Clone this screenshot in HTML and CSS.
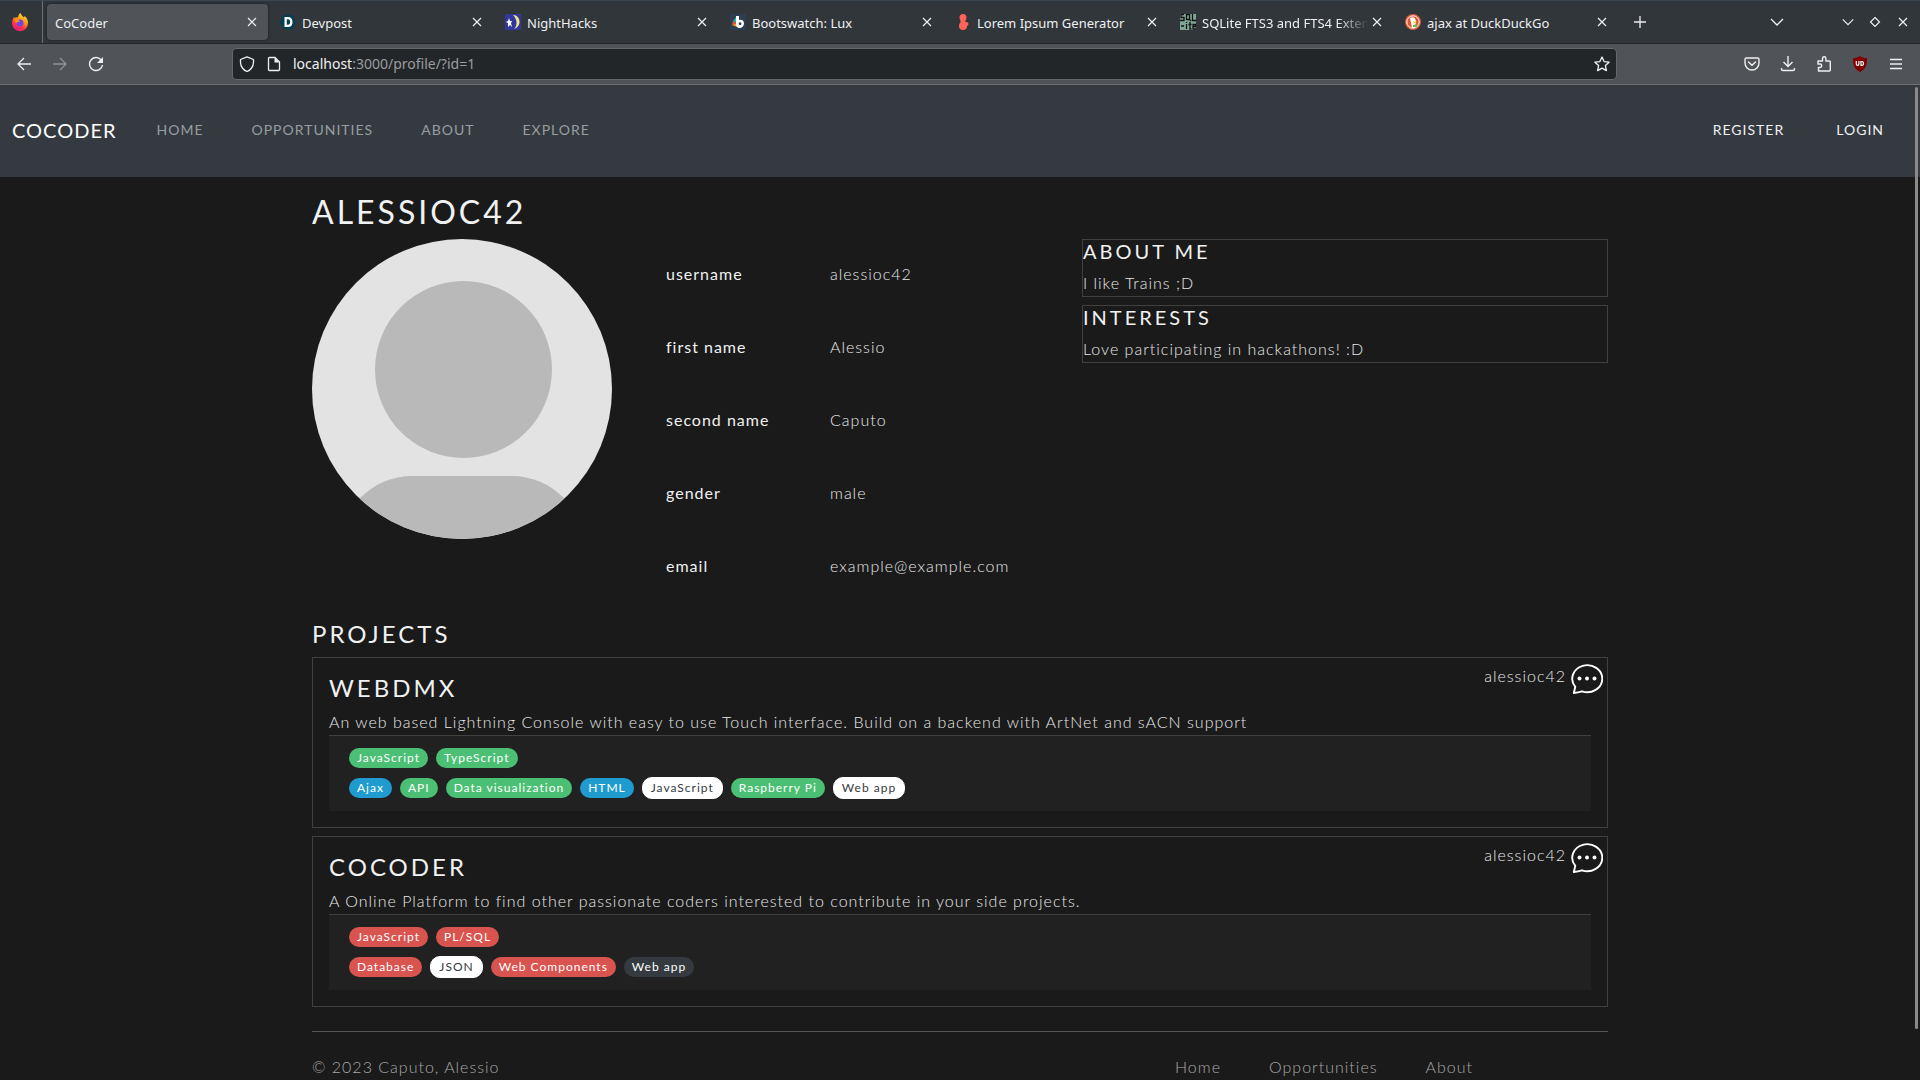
FILE: index.html
```
<!DOCTYPE html>
<html lang="en">
<head>
    <meta charset="UTF-8">
    <meta name="viewport" content="width=device-width, initial-scale=1.0">
    <title>CoCoder</title>
    <link rel="stylesheet" href="styles.css">
</head>
<body>
    <svg class="sprite" aria-hidden="true">
        <symbol id="i-close" viewBox="0 0 16 16"><path d="M4 4l8 8M12 4l-8 8" fill="none" stroke="currentColor" stroke-width="1.2"/></symbol>
        <symbol id="i-down" viewBox="0 0 16 16"><path d="M2 5l6 6 6-6" fill="none" stroke="currentColor" stroke-width="1.3"/></symbol>
        <symbol id="i-chat" viewBox="0 0 32 30">
            <path d="M2.800 29L4.300 22.800A15 13.500 0 1 1 11 27.300Q7 28.500 2.800 29z" fill="none" stroke="currentColor" stroke-width="1.900" stroke-linejoin="round"/>
            <circle cx="8.500" cy="14.500" r="2"/><circle cx="16" cy="14.500" r="2"/><circle cx="23.500" cy="14.500" r="2"/>
        </symbol>
    </svg>

    <!-- Browser window -->
    <div class="tab-bar">
        <div class="firefox-view">
            <button class="icon-btn" aria-label="Firefox View">
                <svg width="18" height="20" viewBox="0 0 18 20">
                    <defs>
                        <linearGradient id="fox" x1="0.8" y1="0" x2="0.3" y2="1">
                            <stop offset="0" stop-color="#fff44f"/><stop offset="0.4" stop-color="#ff980e"/><stop offset="0.7" stop-color="#ff3647"/><stop offset="1" stop-color="#e31587"/>
                        </linearGradient>
                    </defs>
                    <path d="M9.500 1c.5 2 2 3 3.500 4.500l.5-1.500c2.500 2 3.500 4 3.500 7a8 8 0 0 1-16 .5c0-2.500.7-5 2.200-6.800L3.700 6C5 5 6 5.200 7 5.400 7.300 3.500 8 2 9.500 1z" fill="url(#fox)"/>
                    <circle cx="9" cy="11" r="3.500" fill="#7543e3"/>
                    <path d="M3.500 8c2-1 4 0 5.500 1.500-2 0-2.500 1.500-4 1z" fill="#ff980e"/>
                </svg>
            </button>
        </div>
        <div class="tab active">
            <span class="tab-title">CoCoder</span>
            <button class="icon-btn" aria-label="Close tab"><svg width="16" height="16"><use href="#i-close"/></svg></button>
        </div>
        <div class="tab">
            <svg width="16" height="16" viewBox="0 0 16 16"><path d="M4 1h8l4 7-4 7H4L0 8z" fill="#003e54"/><path d="M4.500 3v10H8c3 0 4.500-2 4.500-5S11 3 8 3zm2.300 2.200H8c1.500 0 2.100 1 2.100 2.800S9.500 10.800 8 10.800H6.800z" fill="#fff" fill-rule="evenodd"/></svg>
            <span class="tab-title">Devpost</span>
            <button class="icon-btn" aria-label="Close tab"><svg width="16" height="16"><use href="#i-close"/></svg></button>
        </div>
        <div class="tab">
            <svg width="16" height="16" viewBox="0 0 16 16"><path d="M0 0h16v16H0z" fill="#33379c"/><path d="M8 1c8 0 9 12 1 14 4-4 3-10-1-14z" fill="#f2e58f"/><path d="M4 4l1 3h2L6 9l1 4-2-2-2 2V9L1 8l2-1z" fill="#fff"/></svg>
            <span class="tab-title">NightHacks</span>
            <button class="icon-btn" aria-label="Close tab"><svg width="16" height="16"><use href="#i-close"/></svg></button>
        </div>
        <div class="tab">
            <svg width="16" height="16" viewBox="0 0 16 16"><path d="M0 0h16v16H0z" fill="#2c3e50"/><path d="M7 2v7L3 7z" fill="#1abc9c"/><path d="M3 7l4 2-5 2z" fill="#e74c3c"/><path d="M2 11l5-2v4z" fill="#f39c12"/><path d="M6 2h3v4c3-1 5 1 5 3.500S12 14 9.500 14 6 12 6 9zm4 6.300a1.400 1.400 0 1 0 .1 0z" fill="#fff" fill-rule="evenodd"/></svg>
            <span class="tab-title">Bootswatch: Lux</span>
            <button class="icon-btn" aria-label="Close tab"><svg width="16" height="16"><use href="#i-close"/></svg></button>
        </div>
        <div class="tab">
            <svg width="16" height="16" viewBox="0 0 16 16"><circle cx="8" cy="3.500" r="3.500" fill="#ff6357"/><path d="M5.500 4h5v7h-5z" fill="#ff6357"/><ellipse cx="8" cy="12" rx="4" ry="4" fill="#ff6357"/><circle cx="11.500" cy="10" r="2" fill="#ff6357"/></svg>
            <span class="tab-title">Lorem Ipsum Generator</span>
            <button class="icon-btn" aria-label="Close tab"><svg width="16" height="16"><use href="#i-close"/></svg></button>
        </div>
        <div class="tab">
            <svg width="16" height="16" viewBox="0 0 16 16"><path d="M0 0h16v16H0z" fill="#80a796"/><path d="M4 .5H1v3h3v3H0M6.500.5h3v5h-3zM9 5l2 2M12.500 0v6.500H16M1 12h3M6.500 10v5M6.500 8v1M10 8v7h1.500M8.500 10.500h3M13 12.500h2.500v-2H13v4.500h3" fill="none" stroke="#111" stroke-width="1.300"/></svg>
            <span class="tab-title long">SQLite FTS3 and FTS4 Extensions</span>
            <button class="icon-btn" aria-label="Close tab"><svg width="16" height="16"><use href="#i-close"/></svg></button>
        </div>
        <div class="tab">
            <svg width="16" height="16" viewBox="0 0 16 16"><circle cx="8" cy="8" r="8" fill="#de5833"/><circle cx="8" cy="8" r="6.200" fill="#de5833" stroke="#fff"/><path d="M5 4c3-2 6 0 6 4l-1 6H7z" fill="#fff"/><path d="M8 7l4 1-3 1.500z" fill="#fdd20a"/><path d="M8 11l4-1v3H8z" fill="#65bc46"/></svg>
            <span class="tab-title">ajax at DuckDuckGo</span>
            <button class="icon-btn" aria-label="Close tab"><svg width="16" height="16"><use href="#i-close"/></svg></button>
        </div>
        <button class="icon-btn new-tab" aria-label="New tab"><svg width="16" height="16" viewBox="0 0 16 16"><path d="M8 2v12M2 8h12" stroke="currentColor" stroke-width="1.300"/></svg></button>
        <div class="window-buttons">
            <button class="icon-btn list-tabs" aria-label="List all tabs"><svg width="16" height="16"><use href="#i-down"/></svg></button>
            <button class="icon-btn" aria-label="Minimize"><svg width="14" height="14"><use href="#i-down"/></svg></button>
            <button class="icon-btn" aria-label="Maximize"><svg width="14" height="14" viewBox="0 0 14 14"><path d="M7 2.500L11.500 7 7 11.500 2.500 7z" fill="none" stroke="currentColor" stroke-width="1.200"/></svg></button>
            <button class="icon-btn" aria-label="Close window"><svg width="16" height="16"><use href="#i-close"/></svg></button>
        </div>
    </div>

    <div class="toolbar">
        <div class="toolbar-nav">
            <button class="icon-btn" aria-label="Back"><svg width="16" height="16" viewBox="0 0 16 16"><path d="M15 8H2M8 2L2 8l6 6" fill="none" stroke="currentColor" stroke-width="1.300"/></svg></button>
            <button class="icon-btn" aria-label="Forward" disabled><svg width="16" height="16" viewBox="0 0 16 16"><path d="M1 8h13M8 2l6 6-6 6" fill="none" stroke="currentColor" stroke-width="1.300"/></svg></button>
            <button class="icon-btn" aria-label="Reload"><svg width="16" height="16" viewBox="0 0 16 16"><path d="M13 3.800A6.500 6.500 0 1 0 14.500 9" fill="none" stroke="currentColor" stroke-width="1.400"/><path d="M15 1v6H9z" fill="currentColor"/></svg></button>
        </div>
        <div class="url-bar">
            <svg width="16" height="16" viewBox="0 0 16 16"><path d="M8 .8l6.500 2.700v3c0 4-3 7.700-6.500 9C4.500 14.200 1.500 10.500 1.500 6.500v-3z" fill="none" stroke="currentColor" stroke-width="1.300" stroke-linejoin="round"/></svg>
            <svg width="16" height="16" viewBox="0 0 16 16"><path d="M3.500 1.500H9l4.500 4.500v7.500a1 1 0 0 1-1 1h-9a1 1 0 0 1-1-1v-11a1 1 0 0 1 1-1z" fill="none" stroke="currentColor" stroke-width="1.300"/><path d="M8.500 1.500v5h5z" fill="currentColor"/></svg>
            <div class="url">localhost<span>:3000/profile/?id=1</span></div>
            <button class="icon-btn" aria-label="Bookmark this page"><svg width="16" height="16" viewBox="0 0 16 16"><path d="M8 1l2.100 4.600 5 .6-3.700 3.400 1 5L8 12.100l-4.400 2.500 1-5L.9 6.200l5-.6z" fill="none" stroke="currentColor" stroke-width="1.300" stroke-linejoin="round"/></svg></button>
        </div>
        <div class="toolbar-actions">
            <button class="icon-btn" aria-label="Save to Pocket"><svg width="16" height="16" viewBox="0 0 16 16"><path d="M2.500 2h11a1.500 1.500 0 0 1 1.500 1.500V7A7 7 0 0 1 1 7V3.500A1.500 1.500 0 0 1 2.500 2zM4.500 6L8 9.300 11.500 6" fill="none" stroke="currentColor" stroke-width="1.400" stroke-linecap="round"/></svg></button>
            <button class="icon-btn" aria-label="Downloads"><svg width="16" height="16" viewBox="0 0 16 16"><path d="M8 0v10M3.500 6L8 10.500 12.500 6M1.500 12v1a1.500 1.500 0 0 0 1.500 1.500h10a1.500 1.500 0 0 0 1.500-1.500v-1" fill="none" stroke="currentColor" stroke-width="1.400"/></svg></button>
            <button class="icon-btn" aria-label="Extensions"><svg width="16" height="16" viewBox="0 0 16 16"><path d="M2.500 15v-3.500H4a1.700 1.700 0 0 0 0-3.500H2V5h4.500V2.500a1.700 1.700 0 0 1 3.400 0V5h3.600a.8.8 0 0 1 .8.8V14a1 1 0 0 1-1 1z" fill="none" stroke="currentColor" stroke-width="1.400" stroke-linejoin="round"/></svg></button>
            <button class="icon-btn" aria-label="uBlock Origin"><svg width="16" height="16" viewBox="0 0 16 16"><path d="M8 0c2 1.500 4 2 7 2 0 7-1 11-7 14C2 13 1 9 1 2c3 0 5-.5 7-2z" fill="#800000"/><path d="M4.300 5v3a1.300 1.300 0 0 0 2.600 0V5" fill="none" stroke="#fff" stroke-width="1.200"/><path d="M9 5v4.400h1a2 2 0 0 0 0-3.900H9" fill="none" stroke="#fff" stroke-width="1.200"/></svg></button>
            <button class="icon-btn" aria-label="Menu"><svg width="16" height="16" viewBox="0 0 16 16"><path d="M2 3.500h12M2 8h12M2 12.500h12" stroke="currentColor" stroke-width="1.400"/></svg></button>
        </div>
    </div>

    <!-- Page -->
    <nav class="navbar">
        <a class="brand" href="#">CoCoder</a>
        <ul class="nav-links">
            <li><a href="#">Home</a></li>
            <li><a href="#">Opportunities</a></li>
            <li><a href="#">About</a></li>
            <li><a href="#">Explore</a></li>
        </ul>
        <ul class="nav-links account">
            <li><a href="#">Register</a></li>
            <li><a href="#">Login</a></li>
        </ul>
    </nav>

    <main class="container">
        <h2>alessioc42</h2>
        <div class="profile">
            <svg class="avatar" viewBox="0 0 300 300" role="img" aria-label="Avatar">
                <clipPath id="round"><circle cx="150" cy="150" r="150"/></clipPath>
                <g clip-path="url(#round)">
                    <path d="M0 0h300v300H0z" fill="#e3e3e3"/>
                    <circle cx="151.500" cy="130.500" r="88.500" fill="#b9b9b9"/>
                    <rect x="28" y="237" width="244" height="150" rx="72" fill="#b9b9b9"/>
                </g>
            </svg>
            <table class="profile-table">
                <tr><th scope="row">username</th><td>alessioc42</td></tr>
                <tr><th scope="row">first name</th><td>Alessio</td></tr>
                <tr><th scope="row">second name</th><td>Caputo</td></tr>
                <tr><th scope="row">gender</th><td>male</td></tr>
                <tr><th scope="row">email</th><td>example@example.com</td></tr>
            </table>
            <div class="about">
                <section class="about-box">
                    <h5>About me</h5>
                    <p>I like Trains ;D</p>
                </section>
                <section class="about-box">
                    <h5>Interests</h5>
                    <p>Love participating in hackathons! :D</p>
                </section>
            </div>
        </div>

        <h4 class="projects-title">Projects</h4>
        <div class="projects">
            <article class="project">
                <div class="owner">
                    <a href="#">alessioc42</a>
                    <button class="icon-btn" aria-label="Message alessioc42"><svg class="chat-icon"><use href="#i-chat"/></svg></button>
                </div>
                <h4>WebDMX</h4>
                <p>An web based Lightning Console with easy to use Touch interface. Build on a backend with ArtNet and sACN support</p>
                <div class="tags">
                    <div class="tag-row">
                        <span class="tag green">JavaScript</span>
                        <span class="tag green">TypeScript</span>
                    </div>
                    <div class="tag-row">
                        <span class="tag blue">Ajax</span>
                        <span class="tag green">API</span>
                        <span class="tag green">Data visualization</span>
                        <span class="tag blue">HTML</span>
                        <span class="tag white">JavaScript</span>
                        <span class="tag green">Raspberry Pi</span>
                        <span class="tag white">Web app</span>
                    </div>
                </div>
            </article>
            <article class="project">
                <div class="owner">
                    <a href="#">alessioc42</a>
                    <button class="icon-btn" aria-label="Message alessioc42"><svg class="chat-icon"><use href="#i-chat"/></svg></button>
                </div>
                <h4>CoCoder</h4>
                <p>A Online Platform to find other passionate coders interested to contribute in your side projects.</p>
                <div class="tags">
                    <div class="tag-row">
                        <span class="tag red">JavaScript</span>
                        <span class="tag red">PL/SQL</span>
                    </div>
                    <div class="tag-row">
                        <span class="tag red">Database</span>
                        <span class="tag white">JSON</span>
                        <span class="tag red">Web Components</span>
                        <span class="tag dark">Web app</span>
                    </div>
                </div>
            </article>
        </div>

        <footer class="footer">
            <p>© 2023 Caputo, Alessio</p>
            <ul>
                <li><a href="#">Home</a></li>
                <li><a href="#">Opportunities</a></li>
                <li><a href="#">About</a></li>
            </ul>
        </footer>
    </main>
    <div class="scroll-thumb"></div>
</body>
</html>
```
FILE: styles.css
```
* {
    box-sizing: border-box;
}

body {
    margin: 0;
    height: 100vh;
    overflow: hidden;
    background-color: #1a1a1a;
    color: #e8e8e8;
    font-family: Lato, sans-serif;
    font-size: 16px;
    font-weight: 300;
    line-height: 24px;
    letter-spacing: 1px;
}

h2, h4, h5, p, ul {
    margin: 0;
    padding: 0;
}

h2, h4, h5 {
    color: #f0f1f2;
    font-weight: 400;
    letter-spacing: 3px;
    text-transform: uppercase;
}

h2 {
    font-size: 32px;
    line-height: 38px;
}

h4 {
    font-size: 24px;
    line-height: 27px;
}

h5 {
    font-size: 20px;
    line-height: 22px;
}

p {
    padding-bottom: 2px;
    line-height: 22px;
}

ul {
    display: flex;
    list-style: none;
}

a {
    color: inherit;
    text-decoration: none;
}

.sprite {
    display: none;
}

.icon-btn {
    display: flex;
    flex: none;
    padding: 0;
    border: none;
    background: none;
    color: inherit;
    cursor: pointer;
}

.icon-btn:disabled {
    opacity: 0.4;
}

/* Browser window */
.tab-bar {
    display: flex;
    align-items: center;
    gap: 4px;
    height: 44px;
    border-top: 1px solid #3b4650;
    border-bottom: 1px solid #232629;
    background-color: #31363b;
    color: #eff0f1;
    font-family: "Noto Sans", sans-serif;
    font-size: 13px;
    font-weight: 400;
    letter-spacing: 0;
}

.firefox-view {
    display: flex;
    align-items: center;
    justify-content: center;
    align-self: stretch;
    width: 43px;
    padding-right: 2px;
    border-right: 1px solid #6a6e72;
}

.tab {
    display: flex;
    align-items: center;
    gap: 6px;
    flex: 0 1 221px;
    min-width: 0;
    height: 36px;
    padding: 0 8px;
    border-radius: 4px;
}

.tab.active {
    background-color: #505358;
    box-shadow: 0 0 3px rgba(0, 0, 0, 0.5);
}

.tab svg {
    flex: none;
}

.tab-title {
    flex: 1;
    padding-top: 2px;
    overflow: hidden;
    white-space: nowrap;
}

.tab-title.long {
    margin-right: -6px;
    -webkit-mask-image: linear-gradient(to left, transparent, #000 32px);
    mask-image: linear-gradient(to left, transparent, #000 32px);
}

.new-tab {
    margin-left: 10px;
}

.window-buttons {
    display: flex;
    align-items: center;
    gap: 13px;
    margin-left: auto;
    padding-right: 9px;
}

.list-tabs {
    margin-right: 43px;
}

.toolbar {
    display: flex;
    align-items: center;
    justify-content: space-between;
    height: 41px;
    padding: 0 16px;
    border-bottom: 1px solid #6b6e72;
    background-color: #505358;
    color: #eff0f1;
}

.toolbar-nav,
.toolbar-actions {
    display: flex;
    gap: 20px;
    width: 216px;
}

.toolbar-actions {
    justify-content: flex-end;
    width: 287px;
}

.url-bar {
    display: flex;
    align-items: center;
    gap: 11px;
    flex: 1;
    height: 32px;
    padding: 0 6px;
    border: 1px solid #64676b;
    border-radius: 4px;
    background-color: #232629;
    font-family: "Noto Sans", sans-serif;
    font-size: 14px;
    font-weight: 400;
    letter-spacing: 0;
}

.url {
    flex: 1;
}

.url span {
    color: #9a9c9e;
}

/* Navbar */
.navbar {
    display: flex;
    align-items: center;
    height: 92px;
    padding: 0 12px 2px;
    background-color: #343a40;
    text-transform: uppercase;
}

.brand {
    margin-right: 40px;
    color: #fff;
    font-size: 20px;
    font-weight: 400;
}

.nav-links {
    gap: 48px;
    color: #999da0;
    font-size: 14px;
    font-weight: 400;
}

.nav-links.account {
    gap: 52px;
    margin-left: auto;
    padding-right: 24px;
    color: #f0f1f2;
}

/* Profile */
.container {
    max-width: 1320px;
    margin: 0 auto;
    padding: 16px 12px 0;
}

.profile {
    display: flex;
    margin-top: 8px;
}

.avatar {
    flex: none;
    width: 300px;
    height: 300px;
}

.profile-table {
    margin-left: 30px;
    border-collapse: collapse;
    text-align: left;
}

.profile-table th,
.profile-table td {
    height: 73px;
    padding: 0 24px 3px;
}

.profile-table th {
    width: 164px;
    color: #f0f1f2;
    font-weight: 400;
    white-space: nowrap;
}

.about {
    display: flex;
    flex-direction: column;
    gap: 8px;
    width: 526px;
    margin-left: auto;
}

.about-box {
    border: 1px solid #404040;
}

.about-box h5 {
    margin-bottom: 10px;
}

/* Projects */
.projects-title {
    margin: 16px 0 10px;
}

.projects {
    display: flex;
    flex-direction: column;
    gap: 8px;
}

.project {
    position: relative;
    padding: 16px;
    border: 1px solid #404040;
}

.project h4 {
    margin-bottom: 10px;
}

.owner {
    position: absolute;
    top: 6px;
    right: 4px;
    display: flex;
    gap: 5px;
}

.chat-icon {
    width: 32px;
    height: 30px;
    color: #fff;
    fill: #fff;
}

.tags {
    display: flex;
    flex-direction: column;
    gap: 8px;
    padding: 11px 20px 12px;
    border-top: 1px solid #404040;
    background-color: #212121;
}

.tag-row {
    display: flex;
    align-items: center;
    gap: 8px;
    height: 22px;
}

.tag {
    padding: 0 8px;
    border-radius: 10px;
    color: #fff;
    font-size: 12px;
    font-weight: 400;
    line-height: 20px;
}

.green {
    background-color: #4bbf73;
}

.blue {
    background-color: #1f9bcf;
}

.red {
    background-color: #d9534f;
}

.dark {
    background-color: #343a40;
}

.white {
    border: 1px solid #fff;
    background-color: #fff;
    color: #343a40;
}

/* Footer */
.footer {
    display: flex;
    justify-content: space-between;
    margin-top: 24px;
    padding: 24px 0;
    border-top: 1px solid #565656;
    color: #a8a8a8;
    line-height: 22px;
}

.footer ul {
    gap: 48px;
    padding-right: 135px;
}

.scroll-thumb {
    position: fixed;
    top: 87px;
    right: 2px;
    bottom: 51px;
    width: 3px;
    border-radius: 2px;
    background-color: #8a8a8a;
}
```
